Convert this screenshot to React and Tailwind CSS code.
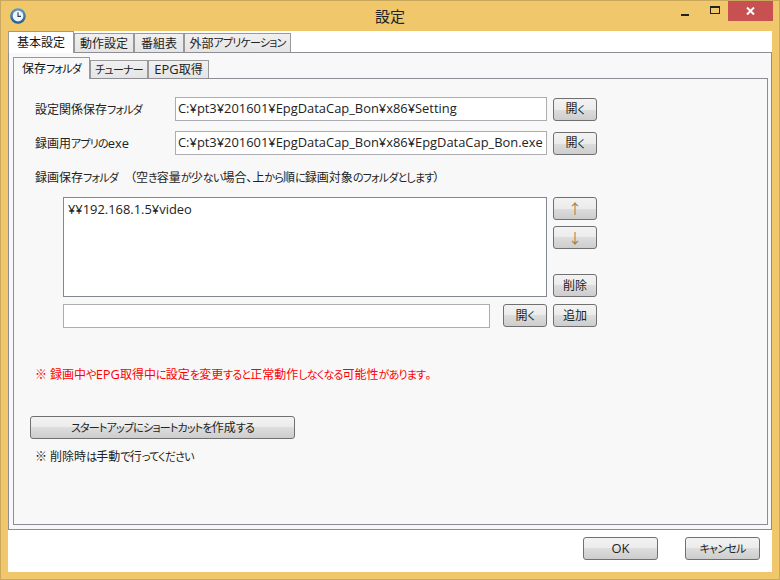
function T({ children }) {
  const parts = String(children).split(/([\u3040-\u30ff]+|[\x21-\x7e¥]+)/).filter(Boolean);
  return (
    <>
      {parts.map((p, i) => {
        if (/^[\u3040-\u30ff]/.test(p)) return <span key={i} className="text-[11px] tracking-[-0.8px]">{p}</span>;
        if (/^[\x21-\x7e¥]/.test(p)) return <span key={i} className="text-[12.9px]">{p}</span>;
        return <span key={i}>{p}</span>;
      })}
    </>
  );
}
function Btn({ className = "", children }) {
  return (
    <button className={"shrink-0 flex items-center justify-center whitespace-nowrap rounded-[3px] border border-[#707070] bg-[linear-gradient(#f3f3f3_0%,#ebebeb_50%,#dddddd_50%,#cdcdcd_100%)] text-[12px] leading-none text-[#222] " + className}>
      {children}
    </button>
  );
}
function Tab({ active, className = "", children }) {
  return active ? (
    <div className={"relative z-10 -mb-px h-[22px] pt-px flex items-center justify-center whitespace-nowrap border border-b-0 border-[#999999] text-[12px] text-[#111] " + className}>{children}</div>
  ) : (
    <div className={"pt-px flex items-center justify-center whitespace-nowrap border border-b-0 border-[#999999] bg-[linear-gradient(#f0f0f0,#e5e5e5)] text-[12px] text-[#222] " + className}>{children}</div>
  );
}
function Input({ className = "", children }) {
  return (
    <div className={"flex items-center border border-[#abadb3] bg-white pl-[2px] text-[12px] text-[#222] whitespace-nowrap overflow-hidden " + className}>{children}</div>
  );
}
export default function App() {
  return (
    <div className="w-[780px] h-[580px] flex flex-col border border-[#c9a85e] bg-[#f0c76b] font-['Open_Sans','Noto_Sans_CJK_JP',sans-serif] [font-feature-settings:'palt']">
      <div className="h-[30px] shrink-0 flex items-start">
        <div className="w-[33px] h-[29px] pl-[1px] flex items-center justify-center">
          <svg width="16" height="16" viewBox="0 0 16 16">
            <defs>
              <linearGradient id="rim" x1="0" y1="0" x2="0" y2="1">
                <stop offset="0" stopColor="#5f9cc8" />
                <stop offset="1" stopColor="#1f5a8a" />
              </linearGradient>
            </defs>
            <circle cx="8" cy="8" r="7.8" fill="url(#rim)" />
            <circle cx="8" cy="8" r="5.4" fill="#f2f5f8" />
            <path d="M8 4.2V8.4H11" fill="none" stroke="#2a3f55" strokeWidth="1.1" />
          </svg>
        </div>
        <div className="flex-1 h-[31px] flex items-center justify-center pl-[70px] text-[15px] text-[#222]">設定</div>
        <div className="w-[26px] h-[20px] flex items-center justify-center">
          <div className="w-[8px] h-[2px] bg-[#222] mt-[7px] mr-[8px]" />
        </div>
        <div className="w-[26px] h-[20px] flex items-center justify-center">
          <div className="w-[10px] h-[8px] border border-[#222] border-t-2 mt-[-2px]" />
        </div>
        <div className="w-[45px] h-[20px] mr-[6px] bg-[#c75050] flex items-center justify-center">
          <svg width="9" height="8" viewBox="0 0 9 8"><path d="M1 0.5 8 7.5M8 0.5 1 7.5" stroke="#fff" strokeWidth="2" /></svg>
        </div>
      </div>
      <div className="flex-1 mx-[7px] mb-[7px] flex flex-col bg-white min-h-0">
        <div className="h-[21px] flex items-end relative">
          <Tab active className="w-[66px] bg-white"><T>基本設定</T></Tab>
          <Tab className="w-[60px] h-[19px]"><T>動作設定</T></Tab>
          <Tab className="w-[50px] h-[19px]"><T>番組表</T></Tab>
          <Tab className="w-[107px] h-[19px]"><T>外部アプリケーション</T></Tab>
        </div>
        <div className="h-[478px] border border-[#8c8e94] bg-[#f8f8f8] pl-[4px] pr-[3px] pt-[4px]">
          <div className="flex items-end h-[21px]">
            <Tab active className="w-[77px] bg-[#f8f8f8]"><T>保存フォルダ</T></Tab>
            <Tab className="w-[58px] h-[18px]"><T>チューナー</T></Tab>
            <Tab className="w-[61px] h-[18px]"><T>EPG取得</T></Tab>
          </div>
          <div className="h-[447px] border border-[#8c8e94] bg-[#f8f8f8] text-[12px] text-[#222]">
            <div className="pl-[21px] pt-[18px] flex flex-col">
              <div className="flex items-center h-[24px]">
                <div className="w-[140px] pt-px"><T>設定関係保存フォルダ</T></div>
                <Input className="w-[372px] h-[24px]"><T>C:¥pt3¥201601¥EpgDataCap_Bon¥x86¥Setting</T></Input>
                <Btn className="w-[44px] h-[23px] ml-[6px]"><T>開く</T></Btn>
              </div>
              <div className="flex items-center h-[24px] mt-[10px]">
                <div className="w-[140px] pt-px"><T>録画用アプリのexe</T></div>
                <Input className="w-[372px] h-[24px]"><T>C:¥pt3¥201601¥EpgDataCap_Bon¥x86¥EpgDataCap_Bon.exe</T></Input>
                <Btn className="w-[44px] h-[23px] ml-[6px]"><T>開く</T></Btn>
              </div>
              <div className="mt-[14px] h-[18px] flex items-center whitespace-pre"><span><T>録画保存フォルダ　（空き容量が少ない場合、上から順に録画対象のフォルダとします）</T></span></div>
              <div className="flex mt-[10px] ml-[28px]">
                <div className="w-[484px] h-[100px] border border-[#828790] bg-white pl-[4px] pt-[2px]"><T>¥¥192.168.1.5¥video</T></div>
                <div className="ml-[6px] flex flex-col">
                  <Btn className="w-[44px] h-[23px] text-[14px] text-[#a97c4d]">↑</Btn>
                  <Btn className="w-[44px] h-[23px] mt-[6px] text-[14px] text-[#a97c4d]">↓</Btn>
                  <Btn className="w-[44px] h-[23px] mt-[25px]"><T>削除</T></Btn>
                </div>
              </div>
              <div className="flex mt-[7px] ml-[28px] items-start">
                <Input className="w-[427px] h-[24px]" />
                <Btn className="w-[44px] h-[23px] ml-[13px]"><T>開く</T></Btn>
                <Btn className="w-[44px] h-[23px] ml-[6px]"><T>追加</T></Btn>
              </div>
              <div className="mt-[38px] h-[18px] flex items-center text-[#ff0000]"><span><T>※ 録画中やEPG取得中に設定を変更すると正常動作しなくなる可能性があります。</T></span></div>
              <Btn className="w-[265px] h-[23px] mt-[32px] -ml-[5px]"><T>スタートアップにショートカットを作成する</T></Btn>
              <div className="mt-[9px] h-[18px] flex items-center"><span><T>※ 削除時は手動で行ってください</T></span></div>
            </div>
          </div>
        </div>
        <div className="flex-1 flex justify-end items-start pt-[7px] pr-[12px] gap-[27px]">
          <Btn className="w-[75px] h-[23px]"><T>OK</T></Btn>
          <Btn className="w-[75px] h-[23px]"><T>キャンセル</T></Btn>
        </div>
      </div>
    </div>
  );
}
